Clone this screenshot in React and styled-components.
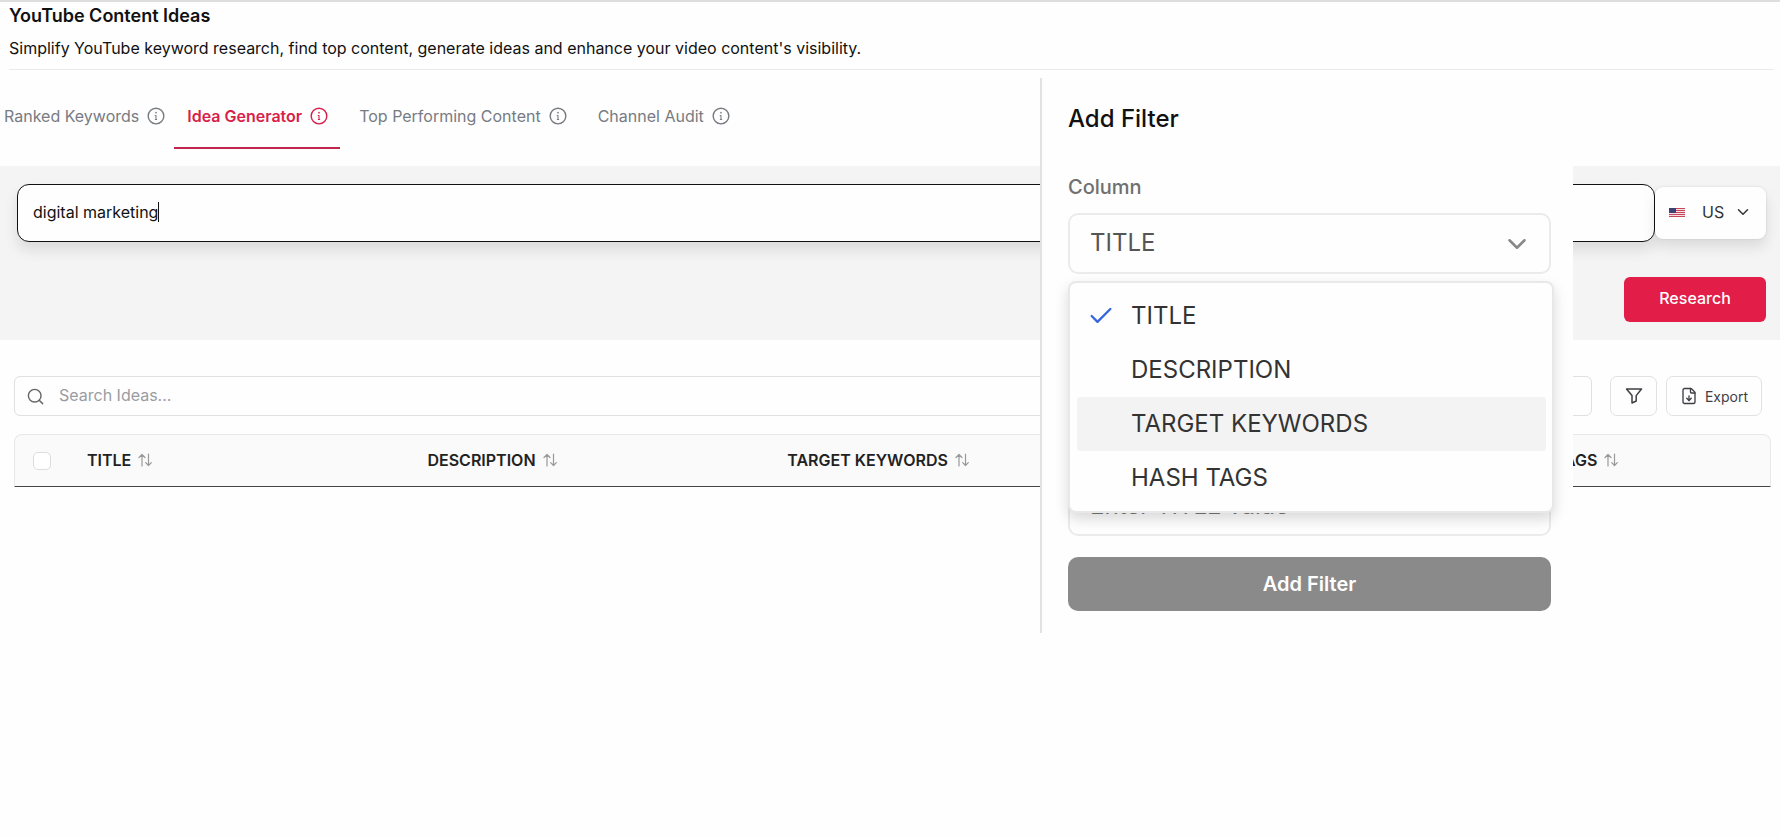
import React, { useState } from 'react'
import styled, { createGlobalStyle } from 'styled-components'
import { Check, ChevronDown, FileDown, Search } from 'lucide-react'

const columns = ['TITLE', 'DESCRIPTION', 'TARGET KEYWORDS', 'HASH TAGS']
const tabs = ['Ranked Keywords', 'Idea Generator', 'Top Performing Content', 'Channel Audit']

const InfoIcon = () => (
    <svg width="20" height="20" viewBox="0 0 24 24" fill="none" stroke="currentColor" strokeWidth="1.7" strokeLinecap="round" strokeLinejoin="round" aria-hidden="true">
        <circle cx="12" cy="12" r="9.4" />
        <path d="M12 8h.01" strokeWidth="2" />
        <path d="M11 11.4h1v4.8M11.2 16.2h1.6" strokeWidth="1.3" />
    </svg>
)

const SortIcon = () => (
    <svg width="14" height="14" viewBox="0 0 14 14" fill="none" stroke="currentColor" strokeWidth="1.2" strokeLinecap="round" strokeLinejoin="round" aria-hidden="true">
        <path d="M4 13V1.5M1 4.5l3-3 3 3M10.500 1v11.500M7.700 9.700l2.800 2.800 2.800-2.800" />
    </svg>
)

const FunnelIcon = () => (
    <svg width="18" height="18" viewBox="0 0 18 18" fill="none" stroke="currentColor" strokeWidth="1.5" strokeLinejoin="round" aria-hidden="true">
        <path d="M1.500 2h15l-5.300 6.600v5.400l-4.200 2V8.600z" />
    </svg>
)

const UsFlag = () => (
    <svg width="16" height="9" viewBox="0 0 16 9" aria-hidden="true">
        <rect width="16" height="9" fill="#f3dfe3" />
        <path d="M0 .5h16M0 2.500h16M0 4.500h16M0 6.500h16M0 8.500h16" stroke="#c8475a" />
        <rect width="7" height="5" fill="#3f4274" />
    </svg>
)

const App = () => {
    const [activeTab, setActiveTab] = useState('Idea Generator')
    const [topic, setTopic] = useState('digital marketing')
    const [column, setColumn] = useState('TITLE')
    const [hovered, setHovered] = useState('TARGET KEYWORDS')

    return (
        <Page>
            <GlobalStyle />
            <Header>
                <h1>YouTube Content Ideas</h1>
                <p>Simplify YouTube keyword research, find top content, generate ideas and enhance your video content's visibility.</p>
            </Header>

            <Tabs>
                {tabs.map(tab => (
                    <Tab key={tab} type="button" $active={tab === activeTab} onClick={() => setActiveTab(tab)}>
                        {tab}<InfoIcon />
                    </Tab>
                ))}
            </Tabs>

            <Research>
                <TopicRow>
                    <TopicBox>
                        <input aria-label="Topic" value={topic} onChange={e => setTopic(e.target.value)} />
                        <Caret />
                    </TopicBox>
                    <Country>
                        <UsFlag />
                        <select aria-label="Country" defaultValue="US">
                            <option>US</option>
                        </select>
                        <ChevronDown size={18} strokeWidth={2} />
                    </Country>
                </TopicRow>
                <ResearchButton type="button">Research</ResearchButton>
            </Research>

            <Toolbar>
                <SearchBox>
                    <Search size={19} strokeWidth={1.8} />
                    <input type="search" aria-label="Search ideas" placeholder="Search Ideas..." />
                </SearchBox>
                <ToolButton type="button" aria-label="Filter" $width="47px"><FunnelIcon /></ToolButton>
                <ToolButton type="button" $width="96px"><FileDown size={18} strokeWidth={1.8} />Export</ToolButton>
            </Toolbar>

            <Table>
                <thead>
                    <tr>
                        <HeadCell $width="72px"><RowCheck type="checkbox" aria-label="Select all" /></HeadCell>
                        <HeadCell $width="19.4%"><span>TITLE <SortIcon /></span></HeadCell>
                        <HeadCell $width="20.5%"><span>DESCRIPTION <SortIcon /></span></HeadCell>
                        <HeadCell $width="40.9%"><span>TARGET KEYWORDS <SortIcon /></span></HeadCell>
                        <HeadCell><span>HASH TAGS <SortIcon /></span></HeadCell>
                    </tr>
                </thead>
            </Table>

            <FilterPanel>
                <h2>Add Filter</h2>
                <label htmlFor="column">Column</label>
                <ColumnField>
                    <ColumnSelect id="column" value={column} onChange={e => setColumn(e.target.value)}>
                        {columns.map(name => <option key={name}>{name}</option>)}
                    </ColumnSelect>
                    <ChevronDown size={30} strokeWidth={2} />
                    <Menu role="listbox" aria-label="Column">
                        {columns.map(name => (
                            <MenuItem
                                key={name}
                                role="option"
                                aria-selected={name === column}
                                $hovered={name === hovered}
                                onMouseEnter={() => setHovered(name)}
                                onClick={() => setColumn(name)}
                            >
                                <span>{name === column && <Check size={28} strokeWidth={2} />}</span>
                                {name}
                            </MenuItem>
                        ))}
                    </Menu>
                </ColumnField>
                <ValueInput aria-label="Value" placeholder={`Enter ${column} value`} />
                <AddButton type="button">Add Filter</AddButton>
            </FilterPanel>
        </Page>
    )
}

export default App

const GlobalStyle = createGlobalStyle`
* {
    box-sizing: border-box;
}
body {
    margin: 0;
    background: #fefefe;
    color: #111;
    font-family: Inter, "Liberation Sans", sans-serif;
    font-size: 16px;
}
button, input, select {
    font: inherit;
    color: inherit;
}
button {
    cursor: pointer;
}
`

const Page = styled.main`
position: relative;
min-height: 100vh;
border-top: 2px solid #dedede;
`

const Header = styled.header`
margin: 0 6px 0 9px;
padding-top: 2px;
border-bottom: 1px solid #ebebeb;
&>h1{
    margin: 0;
    font-size: 18px;
    line-height: 24px;
    font-weight: 600;
}
&>p{
    margin: 8px 0 9px;
    line-height: 24px;
}
`

const Tabs = styled.nav`
display: flex;
height: 96px;
padding: 14px 0 17px;
`

const Tab = styled.button`
display: flex;
align-items: center;
gap: 7px;
margin-right: 6px;
padding: 0 11px 0 13px;
border: none;
border-bottom: 2px solid ${(props) => (props.$active ? "#c0264b" : "transparent")};
background: none;
color: ${(props) => (props.$active ? "#d81f4a" : "#777b82")};
font-weight: ${(props) => (props.$active ? 600 : 400)};
&:first-child{
    margin-right: 0;
    padding: 0 8px 0 4px;
}
`

const Research = styled.section`
display: flex;
flex-direction: column;
align-items: flex-end;
gap: 35px;
padding: 18px 14px 18px 17px;
background: #f4f4f4;
`

const TopicRow = styled.div`
display: flex;
align-items: center;
width: 100%;
`

const TopicBox = styled.div`
display: flex;
align-items: center;
flex: 1;
height: 58px;
padding: 0 15px 2px;
border: 1px solid #111;
border-radius: 12px;
background: #fefefe;
box-shadow: 0 8px 14px rgba(0, 0, 0, 0.1);
&>input{
    field-sizing: content;
    padding: 0;
    border: none;
    outline: none;
    background: none;
    caret-color: transparent;
}
`

const Caret = styled.span`
width: 1px;
height: 20px;
background: #111;
`

const Country = styled.div`
display: flex;
align-items: center;
width: 111px;
height: 52px;
padding: 0 13px 2px 14px;
border-radius: 8px;
background: #fefefe;
box-shadow: 0 0 2px rgba(0, 0, 0, 0.15), 0 8px 14px rgba(0, 0, 0, 0.1);
color: #333;
&>select{
    appearance: none;
    width: 32px;
    margin-left: 17px;
    padding: 0;
    border: none;
    background: none;
}
`

const ResearchButton = styled.button`
width: 142px;
height: 45px;
padding: 0 0 3px;
border: none;
border-radius: 6px;
background: #e11d48;
color: #fff;
font-weight: 500;
`

const Toolbar = styled.div`
display: flex;
gap: 9px;
margin: 36px 18px 18px 14px;
`

const SearchBox = styled.div`
display: flex;
align-items: center;
flex: 1;
gap: 14px;
height: 40px;
margin-right: 9px;
padding: 0 11px;
border: 1px solid #e0e0e0;
border-radius: 6px;
color: #666;
&>input{
    flex: 1;
    padding: 0 0 2px;
    border: none;
    outline: none;
    background: none;
}
&>input::placeholder{
    color: #9a9ca2;
}
`

const ToolButton = styled.button`
display: flex;
justify-content: center;
align-items: center;
gap: 7px;
width: ${(props) => props.$width};
padding: 0;
border: 1px solid #e2e2e5;
border-radius: 7px;
background: none;
color: #3f3f46;
font-size: 14px;
`

const Table = styled.table`
table-layout: fixed;
width: calc(100% - 23px);
margin-left: 14px;
border: 1px solid #e8e8e8;
border-bottom: 1px solid #444;
border-radius: 8px 8px 0 0;
border-spacing: 0;
background: #fafafa;
`

const HeadCell = styled.th`
width: ${(props) => props.$width || "auto"};
height: 51px;
padding: 0;
text-align: left;
font-size: 16px;
font-weight: 600;
color: #222;
&>span{
    display: flex;
    align-items: center;
    gap: 7px;
    padding-bottom: 2px;
}
& svg{
    color: #999;
}
`

const RowCheck = styled.input`
appearance: none;
display: block;
width: 18px;
height: 18px;
margin: 0 0 0 18px;
border: 1px solid #ddd;
border-radius: 5px;
background: #fff;
`

const FilterPanel = styled.aside`
position: absolute;
top: 76px;
right: 207px;
display: flex;
flex-direction: column;
width: 533px;
height: 555px;
padding: 26px 22px 22px 26px;
border-left: 2px solid #e2e2e2;
background: #fefefe;
&>h2{
    margin: 0 0 41px;
    font-size: 24px;
    line-height: 30px;
    font-weight: 500;
}
&>label{
    margin-bottom: 14px;
    font-size: 20px;
    line-height: 24px;
    font-weight: 500;
    color: #707070;
}
`

const ColumnField = styled.div`
position: relative;
&>svg{
    position: absolute;
    top: 16px;
    right: 19px;
    color: #888;
    pointer-events: none;
}
`

const ColumnSelect = styled.select`
appearance: none;
display: block;
width: 100%;
height: 61px;
padding: 0 20px 2px;
border: 2px solid #ebebeb;
border-radius: 10px;
background: none;
font-size: 24px;
color: #555;
`

const Menu = styled.ul`
position: absolute;
top: 68px;
left: 0;
right: -3px;
z-index: 1;
margin: 0;
padding: 6px 6px 6px 7px;
border: 2px solid #e8e8e8;
border-radius: 8px;
background: #fefefe;
box-shadow: 0 6px 14px rgba(0, 0, 0, 0.15);
list-style: none;
`

const MenuItem = styled.li`
display: flex;
align-items: center;
height: 54px;
padding: 0 0 2px 10px;
border-radius: 4px;
background: ${(props) => (props.$hovered ? "#f3f3f3" : "none")};
font-size: 24px;
color: #333;
cursor: pointer;
&>span{
    width: 44px;
    height: 26px;
    color: #3567dc;
}
`

const ValueInput = styled.input`
height: 61px;
margin: auto 0 21px;
padding: 0 20px;
border: 2px solid #ebebeb;
border-radius: 10px;
background: none;
font-size: 24px;
&::placeholder{
    color: #777;
}
`

const AddButton = styled.button`
height: 54px;
border: none;
border-radius: 10px;
background: #8a8a8a;
color: #fff;
font-size: 20px;
font-weight: 600;
`
